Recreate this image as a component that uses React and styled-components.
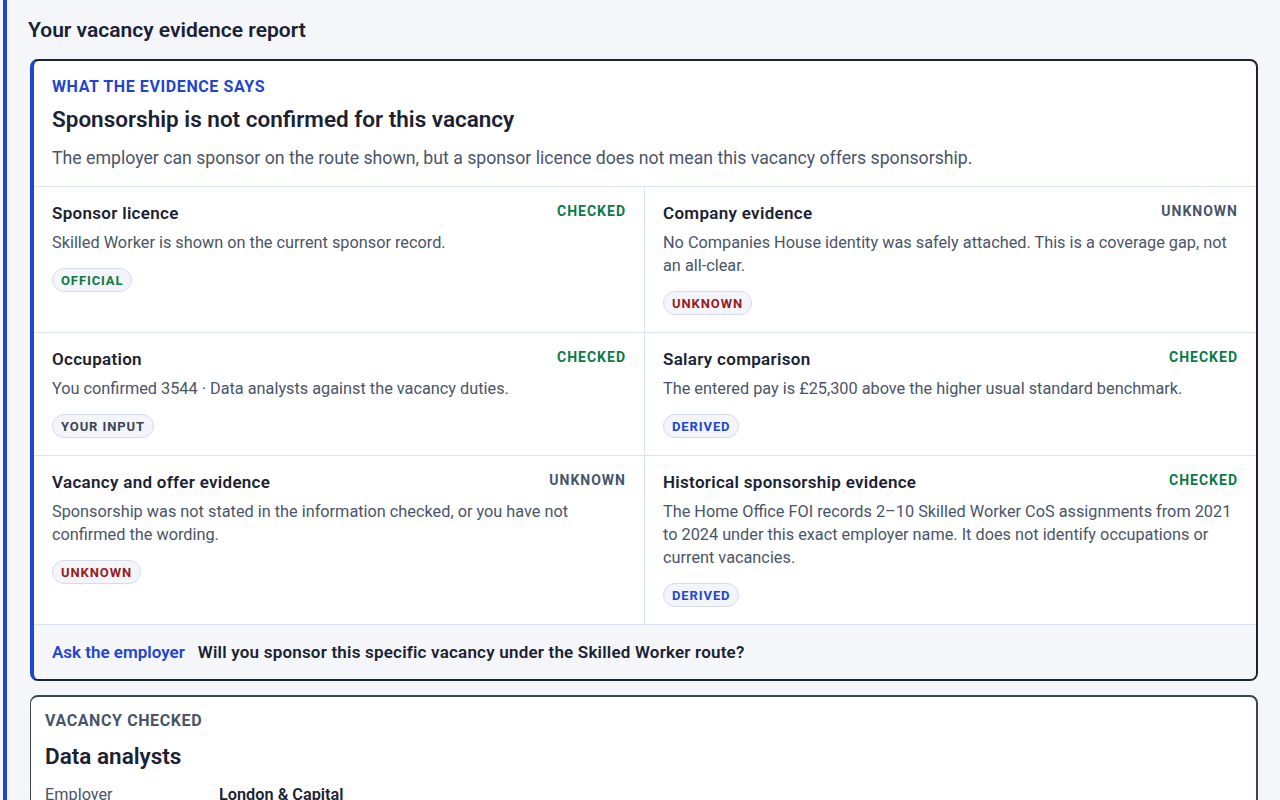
import styled, { createGlobalStyle } from 'styled-components';

const GlobalStyle = createGlobalStyle`
  html, body {
    margin: 0;
    padding: 0;
    background: #f4f6fa;
  }
  body {
    font-family: Roboto, "Noto Sans", Arial, sans-serif;
    color: #1a2233;
    -webkit-font-smoothing: antialiased;
  }
`;

const Shell = styled.div`
  padding-left: 3px;
  height: 800px;
  overflow: hidden;
`;

const Page = styled.main`
  border-left: 4px solid #1f45d1;
  min-height: 800px;
  padding: 16px 22px 40px 21px;
  display: flex;
  flex-direction: column;
`;

const PageTitle = styled.h2`
  margin: 0 0 15px;
  font-size: 21px;
  font-weight: 600;
  line-height: 28px;
  color: #1a2233;
`;

const Card = styled.section`
  margin-left: 2px;
  background: #fff;
  border: 2px solid ${(p) => (p.$strong ? '#1a2233' : '#3a4558')};
  border-left: ${(p) => (p.$strong ? '4px solid #1f45d1' : '1.5px solid #3a4558')};
  border-radius: 8px;
  overflow: hidden;
  & + & {
    margin-top: 14px;
  }
`;

const Intro = styled.div`
  padding: 15px 18px 16px;
  border-bottom: 1px solid #dde3ee;
`;

const Eyebrow = styled.div`
  font-size: 16px;
  font-weight: 700;
  letter-spacing: 0.6px;
  text-transform: uppercase;
  color: ${(p) => p.$color || '#1f45d1'};
  line-height: 22px;
`;

const Headline = styled.h3`
  margin: 6px 0 12px;
  font-size: 22.5px;
  font-weight: 600;
  line-height: 30px;
`;

const Lead = styled.p`
  margin: 0;
  font-size: 17.7px;
  line-height: 24px;
  color: #4a5568;
`;

const Grid = styled.div`
  display: grid;
  grid-template-columns: 1fr 1fr;
`;

const Cell = styled.div`
  padding: 14px 18px 17px;
  border-bottom: 1px solid #dde3ee;
  &:nth-child(odd) {
    border-right: 1px solid #dde3ee;
  }
`;

const CellHead = styled.div`
  display: flex;
  justify-content: space-between;
  align-items: flex-start;
`;

const CellTitle = styled.div`
  font-size: 17px;
  font-weight: 600;
  letter-spacing: 0.3px;
  line-height: 24px;
`;

const Status = styled.div`
  font-size: 14px;
  font-weight: 700;
  letter-spacing: 1px;
  line-height: 20px;
  color: ${(p) => (p.$state === 'CHECKED' ? '#0c7a48' : '#475569')};
`;

const CellText = styled.p`
  margin: 6px 0 14px;
  font-size: 16.3px;
  line-height: 23px;
  color: #4a5568;
`;

const pillColors = {
  OFFICIAL: '#0c7a48',
  UNKNOWN: '#9a1c1c',
  'YOUR INPUT': '#3a4558',
  DERIVED: '#1f45d1',
};

const Pill = styled.span`
  display: inline-flex;
  align-items: center;
  height: 24px;
  padding: 0 8px;
  border: 1px solid #d5dbe8;
  background: #f3f5fa;
  border-radius: 12px;
  font-size: 13px;
  font-weight: 700;
  letter-spacing: 0.9px;
  color: ${(p) => pillColors[p.$kind]};
  box-sizing: border-box;
`;

const Footer = styled.div`
  display: flex;
  align-items: center;
  gap: 13px;
  padding: 16px 18px;
  background: #f4f6fa;
  font-size: 17px;
  line-height: 22px;
`;

const AskLink = styled.a`
  color: #1f45d1;
  font-weight: 600;
  text-decoration: none;
`;

const Question = styled.span`
  font-weight: 600;
  letter-spacing: 0.2px;
  color: #1a2233;
`;

const Summary = styled.div`
  padding: 13px 14px 0;
`;

const JobTitle = styled.h3`
  margin: 9px 0 13px;
  font-size: 22.5px;
  font-weight: 600;
  line-height: 30px;
`;

const Facts = styled.dl`
  display: grid;
  grid-template-columns: 174px 1fr;
  row-gap: 8px;
  margin: 0;
  font-size: 16.3px;
  line-height: 22px;
  dt {
    color: #4a5568;
  }
  dd {
    margin: 0;
    font-weight: 600;
  }
`;

const checks = [
  {
    title: 'Sponsor licence',
    state: 'CHECKED',
    text: 'Skilled Worker is shown on the current sponsor record.',
    source: 'OFFICIAL',
  },
  {
    title: 'Company evidence',
    state: 'UNKNOWN',
    text: 'No Companies House identity was safely attached. This is a coverage gap, not an all-clear.',
    source: 'UNKNOWN',
  },
  {
    title: 'Occupation',
    state: 'CHECKED',
    text: 'You confirmed 3544 · Data analysts against the vacancy duties.',
    source: 'YOUR INPUT',
  },
  {
    title: 'Salary comparison',
    state: 'CHECKED',
    text: 'The entered pay is £25,300 above the higher usual standard benchmark.',
    source: 'DERIVED',
  },
  {
    title: 'Vacancy and offer evidence',
    state: 'UNKNOWN',
    text: 'Sponsorship was not stated in the information checked, or you have not confirmed the wording.',
    source: 'UNKNOWN',
  },
  {
    title: 'Historical sponsorship evidence',
    state: 'CHECKED',
    text: 'The Home Office FOI records 2–10 Skilled Worker CoS assignments from 2021 to 2024 under this exact employer name. It does not identify occupations or current vacancies.',
    source: 'DERIVED',
  },
];

export default function App() {
  return (
    <>
      <GlobalStyle />
      <Shell>
        <Page>
          <PageTitle>Your vacancy evidence report</PageTitle>

          <Card $strong>
            <Intro>
              <Eyebrow>What the evidence says</Eyebrow>
              <Headline>Sponsorship is not confirmed for this vacancy</Headline>
              <Lead>
                The employer can sponsor on the route shown, but a sponsor licence does not mean
                this vacancy offers sponsorship.
              </Lead>
            </Intro>
            <Grid>
              {checks.map((c) => (
                <Cell key={c.title}>
                  <CellHead>
                    <CellTitle>{c.title}</CellTitle>
                    <Status $state={c.state}>{c.state}</Status>
                  </CellHead>
                  <CellText>{c.text}</CellText>
                  <Pill $kind={c.source}>{c.source}</Pill>
                </Cell>
              ))}
            </Grid>
            <Footer>
              <AskLink href="#ask">Ask the employer</AskLink>
              <Question>Will you sponsor this specific vacancy under the Skilled Worker route?</Question>
            </Footer>
          </Card>

          <Card>
            <Summary>
              <Eyebrow $color="#4a5568">Vacancy checked</Eyebrow>
              <JobTitle>Data analysts</JobTitle>
              <Facts>
                <dt>Employer</dt>
                <dd>London &amp; Capital</dd>
                <dt>Location</dt>
                <dd>London</dd>
              </Facts>
            </Summary>
          </Card>
        </Page>
      </Shell>
    </>
  );
}
